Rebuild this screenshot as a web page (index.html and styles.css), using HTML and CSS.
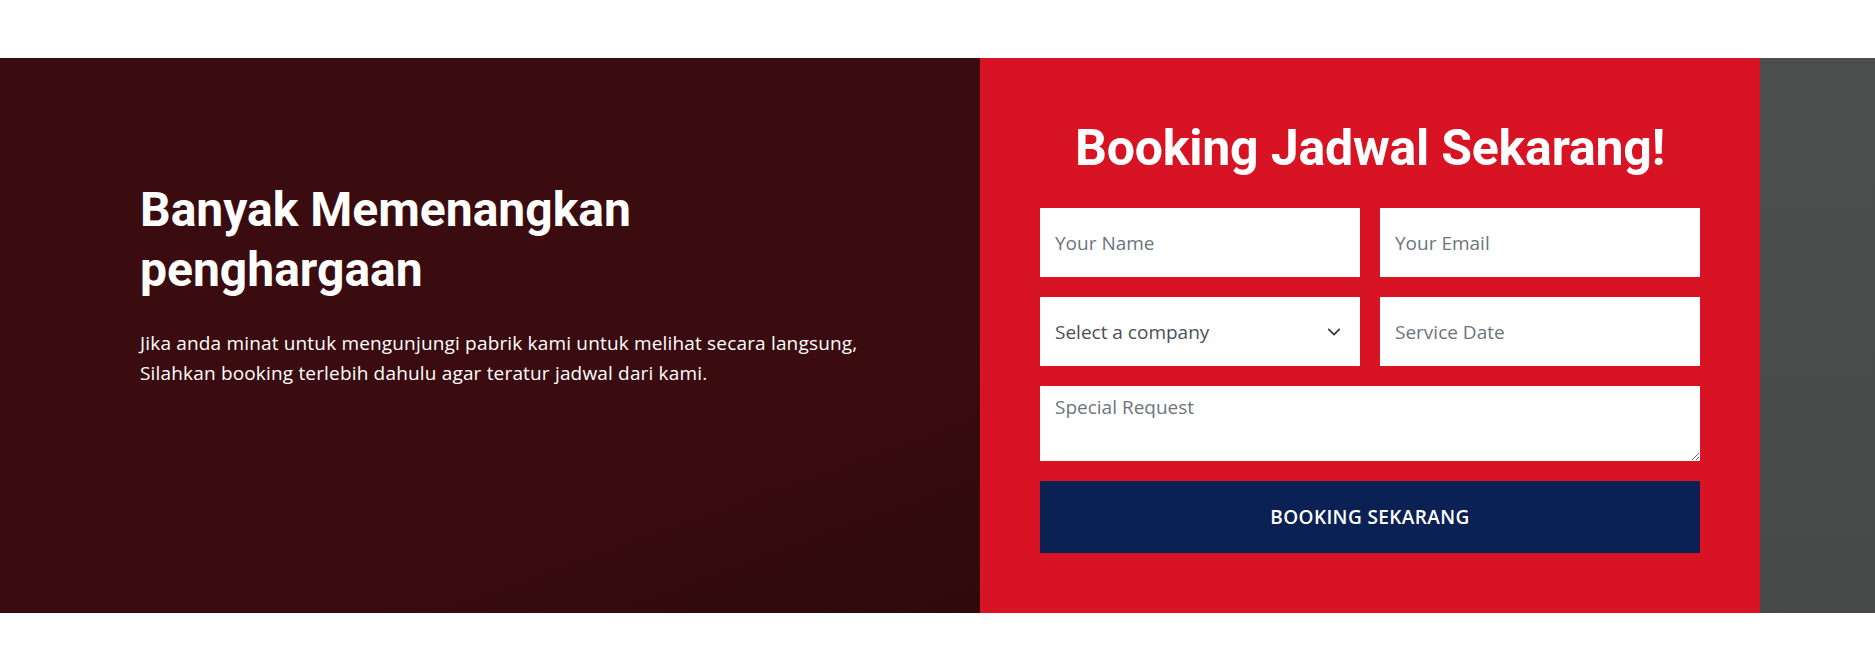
FILE: index.html
```html
<!DOCTYPE html>
<html lang="id">
<head>
<meta charset="utf-8">
<title>Booking</title>
<link rel="stylesheet" href="styles.css">
</head>
<body>
<section class="booking">
  <div class="intro">
    <h1 class="intro-title">Banyak Memenangkan penghargaan</h1>
    <p class="intro-text">Jika anda minat untuk mengunjungi pabrik kami untuk melihat secara langsung, Silahkan booking terlebih dahulu agar teratur jadwal dari kami.</p>
  </div>
  <div class="panel">
    <h1 class="panel-title">Booking Jadwal Sekarang!</h1>
    <form class="form">
      <input class="field" type="text" placeholder="Your Name">
      <input class="field" type="email" placeholder="Your Email">
      <div class="select-wrap">
        <select class="field select">
          <option>Select a company</option>
        </select>
        <svg class="chevron" width="14" height="14" viewBox="0 0 16 16" aria-hidden="true"><path d="M2 5l6 6 6-6" fill="none" stroke="#343a40" stroke-width="2" stroke-linecap="round" stroke-linejoin="round"/></svg>
      </div>
      <input class="field" type="text" placeholder="Service Date">
      <textarea class="field area" placeholder="Special Request"></textarea>
      <button class="submit" type="button">BOOKING SEKARANG</button>
    </form>
  </div>
  <div class="side"></div>
</section>
</body>
</html>
```
FILE: styles.css
```css
* { box-sizing: border-box; }
html, body { margin: 0; padding: 0; background: #ffffff; }
body { font-family: "Open Sans", "Noto Sans", sans-serif; }

.booking {
  margin-top: 58px;
  display: grid;
  grid-template-columns: 980px 780px 1fr;
  height: 555px;
}

.intro {
  background: linear-gradient(160deg, #3a0c0f 0%, #3a0c0f 70%, #2f090a 100%);
  padding: 122px 100px 0 140px;
}
.intro-title {
  margin: 0 0 28px;
  width: 560px;
  font-family: "Roboto", "Liberation Sans", sans-serif;
  font-weight: 700;
  font-size: 48px;
  line-height: 60px;
  letter-spacing: 0;
  color: #ffffff;
}
.intro-text {
  margin: 0;
  font-size: 19px;
  line-height: 30px;
  letter-spacing: 0.17px;
  color: #ffffff;
  max-width: 740px;
}

.panel {
  background: #d81324;
  padding: 60px;
  text-align: center;
}
.panel-title {
  margin: 0 0 30px;
  font-family: "Roboto", "Liberation Sans", sans-serif;
  font-weight: 700;
  font-size: 50px;
  line-height: 60px;
  letter-spacing: -0.2px;
  color: #ffffff;
}
.form {
  display: grid;
  grid-template-columns: 1fr 1fr;
  gap: 20px;
}
.field {
  display: block;
  width: 100%;
  height: 69px;
  border: 0;
  border-radius: 0;
  padding: 0 15px;
  background: #ffffff;
  font-family: "Open Sans", "Noto Sans", sans-serif;
  font-size: 19px;
  color: #495057;
  outline: none;
}
.field::placeholder { color: #6c757d; }
.select-wrap { position: relative; }
.select {
  appearance: none;
  -webkit-appearance: none;
  cursor: pointer;
}
.chevron {
  position: absolute;
  right: 19px;
  top: 50%;
  margin-top: -7px;
  pointer-events: none;
}
.area {
  grid-column: 1 / -1;
  height: 75px;
  padding: 6px 15px;
  line-height: 30px;
  resize: vertical;
}
.submit {
  grid-column: 1 / -1;
  height: 72px;
  border: 0;
  border-radius: 0;
  background: #0b2154;
  color: #ffffff;
  font-family: "Open Sans", "Noto Sans", sans-serif;
  font-weight: 600;
  font-size: 19px;
  letter-spacing: 0.4px;
  cursor: pointer;
}

.side {
  background: linear-gradient(180deg, #4d4e4e 0%, #484949 100%);
}
```
